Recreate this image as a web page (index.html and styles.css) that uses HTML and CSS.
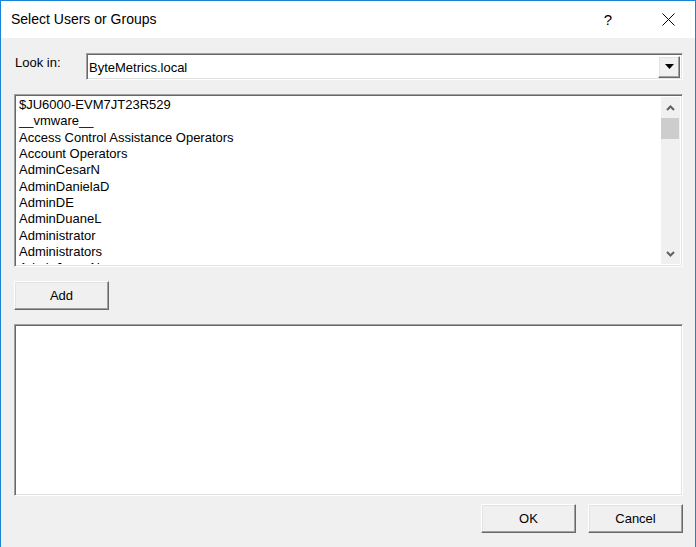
FILE: index.html
```html
<!DOCTYPE html>
<html lang="en">
<head>
  <meta charset="UTF-8">
  <title>Select Users or Groups</title>
  <link rel="stylesheet" href="styles.css">
</head>
<body>
  <div class="dialog">
    <div class="titlebar">
      <div class="title">Select Users or Groups</div>
      <div class="help">?</div>
      <div class="close">
        <svg width="13" height="13" viewBox="0 0 13 13"><path d="M0.5 0.5 L12.5 12.5 M12.5 0.5 L0.5 12.5" stroke="#000" stroke-width="1" fill="none"/></svg>
      </div>
    </div>

    <div class="content">
      <div class="look-in">
        <div class="label">Look in:</div>
        <div class="combo sunken">
          <div class="combo-value">ByteMetrics.local</div>
          <div class="combo-btn raised">
            <svg width="9" height="5" viewBox="0 0 9 5"><path d="M0 0 H9 L4.5 5 Z" fill="#000"/></svg>
          </div>
        </div>
      </div>

      <div class="listbox sunken">
        <div class="items">
          <div class="item">$JU6000-EVM7JT23R529</div>
          <div class="item">__vmware__</div>
          <div class="item">Access Control Assistance Operators</div>
          <div class="item">Account Operators</div>
          <div class="item">AdminCesarN</div>
          <div class="item">AdminDanielaD</div>
          <div class="item">AdminDE</div>
          <div class="item">AdminDuaneL</div>
          <div class="item">Administrator</div>
          <div class="item">Administrators</div>
          <div class="item">AdminJasonN</div>
        </div>
        <div class="scrollbar">
          <div class="arrow">
            <svg width="9" height="6" viewBox="0 0 9 6"><path d="M1 5 L4.5 1.5 L8 5" stroke="#606060" stroke-width="2" fill="none"/></svg>
          </div>
          <div class="thumb"></div>
          <div class="track"></div>
          <div class="arrow">
            <svg width="9" height="6" viewBox="0 0 9 6"><path d="M1 1 L4.5 4.5 L8 1" stroke="#606060" stroke-width="2" fill="none"/></svg>
          </div>
        </div>
      </div>

      <div class="btn raised add">Add</div>

      <div class="selected sunken"></div>

      <div class="footer">
        <div class="btn raised">OK</div>
        <div class="btn raised">Cancel</div>
      </div>
    </div>
  </div>
</body>
</html>
```

FILE: styles.css
```css
* {
  box-sizing: border-box;
  margin: 0;
  padding: 0;
}

body {
  font-family: "Liberation Sans", Arial, sans-serif;
  font-size: 13px;
  color: #000;
  background: #f0f0f0;
}

.dialog {
  width: 696px;
  height: 547px;
  border: 1px solid #1883d7;
  border-bottom: none;
  background: #f0f0f0;
  display: flex;
  flex-direction: column;
}

.titlebar {
  height: 37px;
  background: #fff;
  display: flex;
  align-items: center;
  padding-left: 10px;
}

.title {
  font-size: 14px;
  flex: 1;
  padding-bottom: 1px;
}

.help {
  font-size: 15px;
  width: 20px;
  margin-right: 40px;
  text-align: center;
}

.close {
  width: 20px;
  margin-right: 17px;
  display: flex;
  justify-content: center;
}

.content {
  padding: 15px 12px 0 13px;
  display: flex;
  flex-direction: column;
}

/* classic 3d borders */
.sunken {
  border-top: 1px solid #a0a0a0;
  border-left: 1px solid #a0a0a0;
  border-right: 1px solid #fff;
  border-bottom: 1px solid #fff;
  box-shadow: inset 1px 1px 0 #696969, inset -1px -1px 0 #e3e3e3;
  background: #fff;
}

.raised {
  border-top: 1px solid #fff;
  border-left: 1px solid #fff;
  border-right: 1px solid #696969;
  border-bottom: 1px solid #696969;
  box-shadow: inset -1px -1px 0 #a0a0a0, inset 1px 1px 0 #e3e3e3;
  background: #f0f0f0;
}

.look-in {
  display: flex;
  align-items: center;
  height: 27px;
}

.label {
  width: 72px;
  padding-left: 1px;
  padding-bottom: 8px;
}

.combo {
  flex: 1;
  height: 27px;
  display: flex;
  align-items: center;
  padding: 2px;
}

.combo-value {
  flex: 1;
  padding-top: 1px;
}

.combo-btn {
  width: 22px;
  height: 22px;
  display: flex;
  align-items: center;
  justify-content: center;
}

.listbox {
  margin-top: 14px;
  height: 173px;
  display: flex;
  padding: 2px;
  overflow: hidden;
}

.items {
  flex: 1;
  padding-left: 2px;
  overflow: hidden;
}

.item {
  line-height: 16.33px;
  height: 16.33px;
  white-space: nowrap;
}

.scrollbar {
  width: 19px;
  background: #f0f0f0;
  display: flex;
  flex-direction: column;
}

.arrow {
  height: 21px;
  display: flex;
  align-items: center;
  justify-content: center;
}

.thumb {
  height: 21px;
  background: #cdcdcd;
  margin-right: 1px;
}

.track {
  flex: 1;
}

.btn {
  width: 95px;
  height: 29px;
  display: flex;
  align-items: center;
  justify-content: center;
}

.add {
  margin-top: 14px;
}

.selected {
  margin-top: 14px;
  height: 172px;
}

.footer {
  margin-top: 8px;
  display: flex;
  justify-content: flex-end;
  gap: 12px;
}
```
